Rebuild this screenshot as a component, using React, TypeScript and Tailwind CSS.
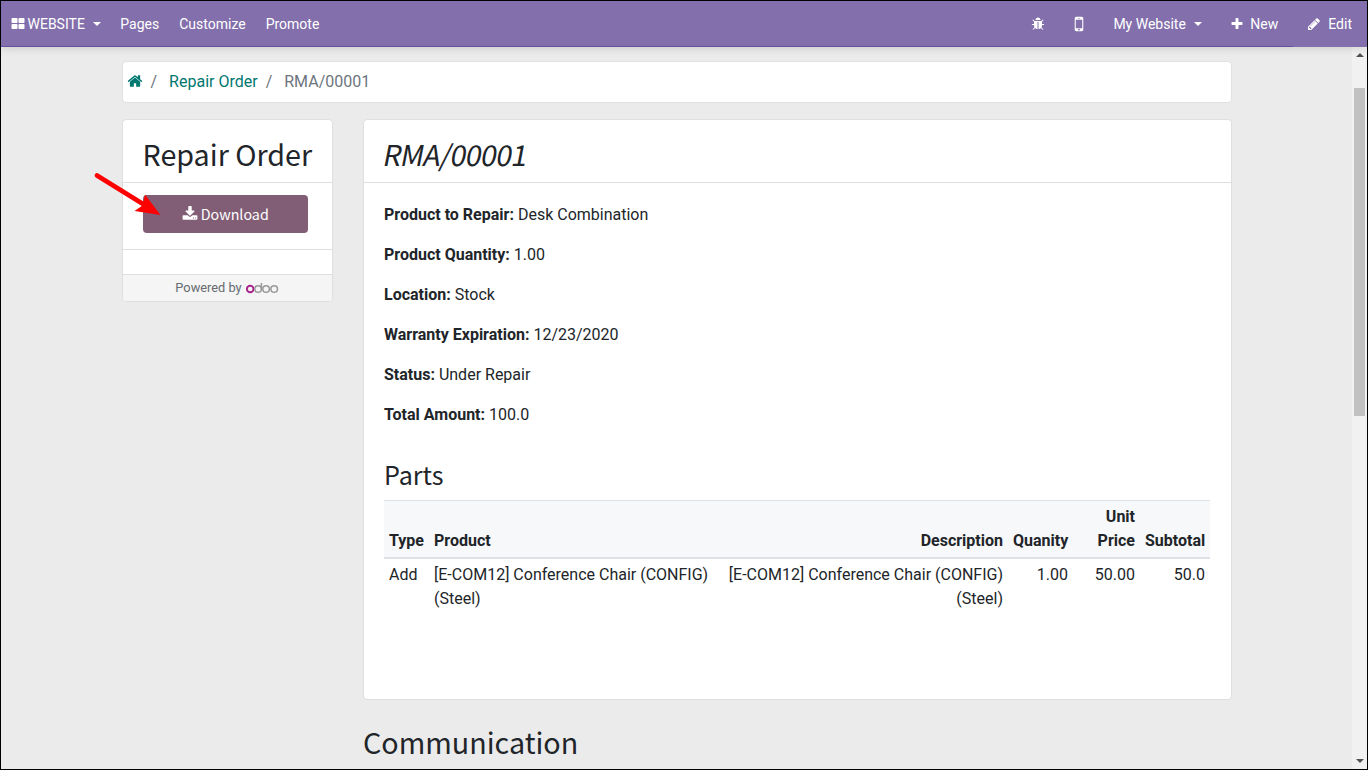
import React from "react";

const paths = {
  home: "M1472 992v480q0 26-19 45t-45 19h-384v-384h-256v384h-384q-26 0-45-19t-19-45v-480q0-1 .5-3t.5-3l575-474 575 474q1 2 1 6zm223-69l-62 74q-8 9-21 11h-3q-13 0-21-7l-692-577-692 577q-12 8-24 7-13-2-21-11l-62-74q-8-10-7-23.5t11-21.5l719-599q32-26 76-26t76 26l244 204v-195q0-14 9-23t23-9h192q14 0 23 9t9 23v408l219 182q10 8 11 21.5t-7 23.5z",
  plus: "M1600 736v192q0 40-28 68t-68 28h-416v416q0 40-28 68t-68 28h-192q-40 0-68-28t-28-68v-416h-416q-40 0-68-28t-28-68v-192q0-40 28-68t68-28h416v-416q0-40 28-68t68-28h192q40 0 68 28t28 68v416h416q40 0 68 28t28 68z",
  pencil: "M491 1536l91-91-235-235-91 91v107h128v128h107zm523-928q0-22-22-22-10 0-17 7l-542 542q-7 7-7 17 0 22 22 22 10 0 17-7l542-542q7-7 7-17zm-54-192l416 416-832 832h-416v-416zm683 96q0 53-37 90l-166 166-416-416 166-165q36-38 90-38 53 0 91 38l235 234q37 39 37 91z",
  bug: "M1696 960q0 26-19 45t-45 19h-224q0 171-67 290l208 209q19 19 19 45t-19 45q-18 19-45 19t-45-19l-198-197q-5 5-15 13t-42 28.5-65 36.5-82 29-97 13v-896h-128v896q-51 0-101.5-13.5t-87-33-66-39-43.5-32.5l-15-14-183 207q-20 21-48 21-24 0-43-16-19-18-20.5-44.5t15.5-46.5l202-227q-58-114-58-274h-224q-26 0-45-19t-19-45 19-45 45-19h224v-294l-173-173q-19-19-19-45t19-45 45-19 45 19l173 173h844l173-173q19-19 45-19t45 19 19 45-19 45l-173 173v294h224q26 0 45 19t19 45zm-480-576h-640q0-133 93.5-226.5t226.5-93.5 226.5 93.5 93.5 226.5z",
  mobile: "M976 1408q0-33-23.5-56.5t-56.5-23.5-56.5 23.5-23.5 56.5 23.5 56.5 56.5 23.5 56.5-23.5 23.5-56.5zm208-160v-704q0-13-9.5-22.5t-22.5-9.5h-512q-13 0-22.5 9.5t-9.5 22.5v704q0 13 9.5 22.5t22.5 9.5h512q13 0 22.5-9.5t9.5-22.5zm-192-848q0-16-16-16h-160q-16 0-16 16t16 16h160q16 0 16-16zm288-16v1024q0 52-38 90t-90 38h-512q-52 0-90-38t-38-90v-1024q0-52 38-90t90-38h512q52 0 90 38t38 90z",
  download: "M1344 1344q0-26-19-45t-45-19-45 19-19 45 19 45 45 19 45-19 19-45zm256 0q0-26-19-45t-45-19-45 19-19 45 19 45 45 19 45-19 19-45zm128-224v320q0 40-28 68t-68 28h-1472q-40 0-68-28t-28-68v-320q0-40 28-68t68-28h465l135 136q58 56 136 56t136-56l136-136h464q40 0 68 28t28 68zm-325-569q17 41-14 70l-448 448q-18 19-45 19t-45-19l-448-448q-31-29-14-70 17-39 59-39h256v-448q0-26 19-45t45-19h256q26 0 45 19t19 45v448h256q42 0 59 39z",
  grid: "M832 1024v384q0 52-38 90t-90 38h-512q-52 0-90-38t-38-90v-384q0-52 38-90t90-38h512q52 0 90 38t38 90zm0-768v384q0 52-38 90t-90 38h-512q-52 0-90-38t-38-90v-384q0-52 38-90t90-38h512q52 0 90 38t38 90zm896 768v384q0 52-38 90t-90 38h-512q-52 0-90-38t-38-90v-384q0-52 38-90t90-38h512q52 0 90 38t38 90zm0-768v384q0 52-38 90t-90 38h-512q-52 0-90-38t-38-90v-384q0-52 38-90t90-38h512q52 0 90 38t38 90z",
};

function Icon({ name, className }: { name: keyof typeof paths; className: string }) {
  return (
    <svg viewBox="0 0 1792 1792" fill="currentColor" className={`shrink-0 ${className}`}>
      <path d={paths[name]} />
    </svg>
  );
}

function Caret() {
  return <span className="ml-2 h-0 w-0 border-x-4 border-t-4 border-x-transparent border-t-white" />;
}

function Heading({ children, className = "" }: { children: React.ReactNode; className?: string }) {
  return (
    <div className={`whitespace-nowrap font-['Noto_Sans_CJK_SC',sans-serif] text-[28.7px] leading-[38px] ${className}`}>
      {children}
    </div>
  );
}

const details = [
  ["Product to Repair:", "Desk Combination"],
  ["Product Quantity:", "1.00"],
  ["Location:", "Stock"],
  ["Warranty Expiration:", "12/23/2020"],
  ["Status:", "Under Repair"],
  ["Total Amount:", "100.0"],
];

function TopBar() {
  return (
    <nav className="relative z-10 flex h-[46px] shrink-0 items-center bg-[#836fac] text-sm text-white shadow-[0_2px_8px_rgba(0,0,0,0.12)]">
      <div className="flex w-full items-center pr-[15px] pl-[9.5px]">
        <Icon name="grid" className="mr-[3px] h-[14px] w-[14px]" />
        <span>WEBSITE</span>
        <Caret />
        <span className="ml-[19.500px]">Pages</span>
        <span className="ml-[20px]">Customize</span>
        <span className="ml-[20px]">Promote</span>
        <span className="flex-1" />
        <Icon name="bug" className="mr-[24px] h-[14px] w-[14px]" />
        <Icon name="mobile" className="mr-[24px] h-[20px] w-[20px]" />
        <span>My Website</span>
        <Caret />
        <Icon name="plus" className="ml-[28.500px] h-[14px] w-[14px]" />
        <span className="ml-[6px]">New</span>
        <Icon name="pencil" className="ml-[29px] h-[14px] w-[14px]" />
        <span className="ml-[7px]">Edit</span>
      </div>
      <div className="absolute bottom-0 left-0 h-px w-[1292px] bg-[#664f9b]" />
    </nav>
  );
}

function Sidebar() {
  return (
    <aside className="relative h-[183px] w-[211px] shrink-0 rounded border border-[#dfdfdf] bg-white">
      <div className="flex h-[63px] items-center border-b border-[#dfdfdf] pt-[5px] pl-[19.5px]">
        <Heading>Repair Order</Heading>
      </div>
      <div className="h-[67px] border-b border-[#dfdfdf] pt-[12px] pl-[20px]">
        <div className="flex h-[38px] w-[165px] items-center justify-center gap-[2.500px] rounded bg-[#815e76] font-['Noto_Sans_CJK_SC',sans-serif] text-[14.300px] leading-6 text-white">
          <Icon name="download" className="mt-[-1px] h-4 w-4" />
          <span>Download</span>
        </div>
      </div>
      <div className="h-[24px]" />
      <div className="flex h-[27px] items-center justify-center rounded-b border-t border-[#dfdfdf] bg-[#f5f5f5] text-[12.8px] text-[#666b70]">
        <span>Powered by</span>
        <svg viewBox="0 0 34 12" fill="none" className="ml-1 h-3 w-[34px]" strokeWidth="1.5">
          <circle cx="4.200" cy="7" r="3.300" stroke="#a8248c" strokeWidth="1.9" />
          <g stroke="#999">
            <circle cx="12.100" cy="7" r="3.300" />
            <path d="M15.400 1v6" />
            <circle cx="20.100" cy="7" r="3.300" />
            <circle cx="28.200" cy="7" r="3.300" />
          </g>
        </svg>
      </div>
      <svg viewBox="0 0 70 46" className="absolute top-[50px] left-[-30px] h-[46px] w-[70px]">
        <path d="M4 5.5 50 34" stroke="#f00" strokeWidth="4.8" strokeLinecap="round" fill="none" />
        <path d="M67.500 45 52 24.500 49.500 35.500 41.500 41Z" fill="#f00" />
      </svg>
    </aside>
  );
}

function PartsTable() {
  return (
    <table className="w-[826px] table-fixed border-collapse leading-6">
      <colgroup>
        <col className="w-[45px]" />
        <col className="w-[287px]" />
        <col className="w-[292px]" />
        <col className="w-[65px]" />
        <col className="w-[67px]" />
        <col className="w-[70px]" />
      </colgroup>
      <thead className="border-t border-b-2 border-[#dee2e6] bg-[#f7f8fa] font-bold">
        <tr className="h-[57px] text-right align-bottom">
          <td className="px-[5px] pb-[4px] text-left">Type</td>
          <td className="px-[5px] pb-[4px] text-left">Product</td>
          <td className="px-[5px] pb-[4px]">Description</td>
          <td className="px-[5px] pb-[4px]">Quanity</td>
          <td className="px-[5px] pb-[4px]">Unit<br />Price</td>
          <td className="px-[5px] pb-[4px]">Subtotal</td>
        </tr>
      </thead>
      <tbody>
        <tr className="text-right align-top">
          <td className="p-[5px] pt-1 text-left">Add</td>
          <td className="p-[5px] pt-1 text-left">[E-COM12] Conference Chair (CONFIG)<br />(Steel)</td>
          <td className="p-[5px] pt-1">[E-COM12] Conference Chair (CONFIG)<br />(Steel)</td>
          <td className="p-[5px] pt-1">1.00</td>
          <td className="p-[5px] pt-1">50.00</td>
          <td className="p-[5px] pt-1">50.0</td>
        </tr>
      </tbody>
    </table>
  );
}

export default function App() {
  return (
    <div className="flex h-[770px] w-[1368px] flex-col overflow-hidden border border-black bg-[#ebebeb] font-['Roboto',sans-serif] text-base text-[#212529]">
      <TopBar />
      <div className="flex min-h-0 flex-1">
        <main className="min-w-0 flex-1 overflow-hidden pt-[14px] pl-[121px]">
          <div className="flex h-[42px] w-[1110px] items-center rounded border border-[#dfe1e4] bg-white pl-[4px] text-[#6c757d]">
            <Icon name="home" className="h-4 w-4 -translate-y-px text-[#00776f]" />
            <span className="ml-[7.500px]">/</span>
            <span className="ml-[12px] text-[#00776f]">Repair Order</span>
            <span className="ml-[8px]">/</span>
            <span className="ml-[12px]">RMA/00001</span>
          </div>
          <div className="mt-[16px] flex items-start gap-[30px]">
            <Sidebar />
            <div>
              <section className="h-[581px] w-[869px] rounded border border-[#dfdfdf] bg-white">
                <div className="flex h-[63px] items-center border-b border-[#dfdfdf] pt-[5px] pl-[20px]">
                  <Heading className="-skew-x-[11deg] tracking-[-0.7px]">RMA/00001</Heading>
                </div>
                <div className="pt-[20px] pl-[20px]">
                  <div className="flex flex-col gap-4">
                    {details.map(([label, value]) => (
                      <p key={label} className="leading-6">
                        <b>{label}</b> {value}
                      </p>
                    ))}
                  </div>
                  <div className="mt-[31px] mb-[10px] font-['Noto_Sans_CJK_SC',sans-serif] text-[25.1px] leading-[32px]">Parts</div>
                  <PartsTable />
                </div>
              </section>
              <Heading className="mt-[23px]">Communication</Heading>
            </div>
          </div>
        </main>
        <div className="flex w-[15px] shrink-0 flex-col items-center bg-[#f1f1f1]">
          <svg viewBox="0 0 8 4" className="mt-[6px] h-1 w-2" fill="#505050"><path d="M4 0 8 4H0Z" /></svg>
          <div className="mt-[31px] h-[328px] w-[11px] bg-[#c1c1c1]" />
          <span className="flex-1" />
          <svg viewBox="0 0 8 4" className="mb-[6px] h-1 w-2" fill="#505050"><path d="M0 0h8L4 4Z" /></svg>
        </div>
      </div>
    </div>
  );
}
